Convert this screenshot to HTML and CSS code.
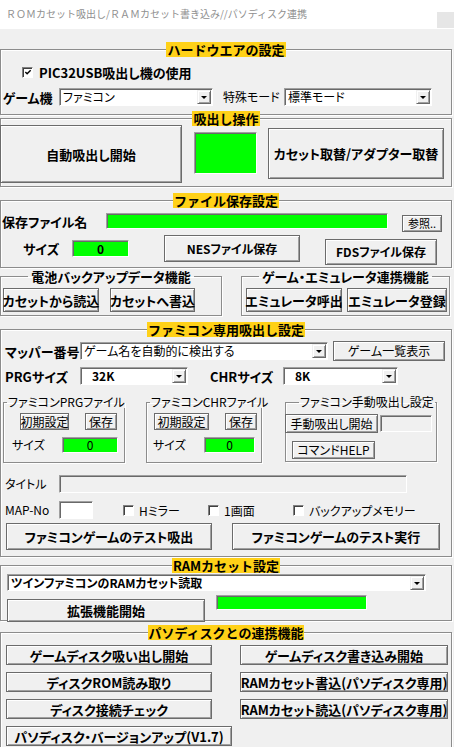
FILE: index.html
```html
<!DOCTYPE html>
<html lang="ja">
<head>
    <meta charset="UTF-8">
    <title>ROMカセット吸出し</title>
    <link rel="stylesheet" href="styles.css">
</head>
<body>
    <div class="titlebar">
        <span class="title-text">ＲＯＭカセット吸出し/ＲＡＭカセット書き込み//パソディスク連携</span>
        <span class="close-box"></span>
    </div>

    <!-- ハードウエア -->
    <fieldset class="group g-hw">
        <legend class="group-title hl">ハードウエアの設定</legend>
        <div class="row hw-check">
            <span class="checkbox checked"><svg viewBox="0 0 9 9" width="9" height="9"><path d="M1.5 4 L3.5 6 L7.5 2" fill="none" stroke="#000" stroke-width="1.6"/></svg></span>
            <span class="bold">PIC32USB吸出し機の使用</span>
        </div>
        <div class="row hw-select">
            <span class="label bold lbl-console">ゲーム機</span>
            <div class="combo combo-console"><span class="combo-text">ファミコン</span><span class="drop"></span></div>
            <span class="label lbl-mode">特殊モード</span>
            <div class="combo combo-mode"><span class="combo-text">標準モード</span><span class="drop"></span></div>
        </div>
    </fieldset>

    <!-- 吸出し操作 -->
    <fieldset class="group g-dump">
        <legend class="group-title hl">吸出し操作</legend>
        <div class="row dump-row">
            <button class="btn bold btn-auto">自動吸出し開始</button>
            <div class="field green dump-lamp"></div>
            <button class="btn bold btn-swap">カセット取替/アダプター取替</button>
        </div>
    </fieldset>

    <!-- ファイル保存 -->
    <fieldset class="group g-save">
        <legend class="group-title hl">ファイル保存設定</legend>
        <div class="row save-name">
            <span class="label bold lbl-file">保存ファイル名</span>
            <div class="field green file-field"></div>
            <button class="btn small btn-browse">参照..</button>
        </div>
        <div class="row save-size">
            <span class="label bold lbl-size">サイズ</span>
            <div class="field green size-field bold">0</div>
            <button class="btn bold btn-nes">NESファイル保存</button>
            <button class="btn bold btn-fds">FDSファイル保存</button>
        </div>
    </fieldset>

    <div class="pair">
        <fieldset class="group g-battery">
            <legend class="group-title">電池バックアップデータ機能</legend>
            <div class="row pair-row">
                <button class="btn bold btn-read">カセットから読込</button>
                <button class="btn bold btn-write">カセットへ書込</button>
            </div>
        </fieldset>
        <fieldset class="group g-emu">
            <legend class="group-title">ゲーム・エミュレータ連携機能</legend>
            <div class="row pair-row">
                <button class="btn bold btn-emu-call">エミュレータ呼出</button>
                <button class="btn bold btn-emu-reg">エミュレータ登録</button>
            </div>
        </fieldset>
    </div>

    <!-- ファミコン専用 -->
    <fieldset class="group g-fc">
        <legend class="group-title hl">ファミコン専用吸出し設定</legend>
        <div class="row fc-mapper">
            <span class="label bold lbl-fc">マッパー番号</span>
            <div class="combo combo-mapper"><span class="combo-text">ゲーム名を自動的に検出する</span><span class="drop"></span></div>
            <button class="btn btn-list">ゲーム一覧表示</button>
        </div>
        <div class="row fc-size">
            <span class="label bold lbl-fc">PRGサイズ</span>
            <div class="combo combo-prg"><span class="combo-text bold">32K</span><span class="drop"></span></div>
            <span class="label bold lbl-chr">CHRサイズ</span>
            <div class="combo combo-chr"><span class="combo-text bold">8K</span><span class="drop"></span></div>
        </div>

        <div class="row fc-subs">
            <fieldset class="sub sub-prg">
                <legend class="sub-title">ファミコンPRGファイル</legend>
                <div class="row sub-btns">
                    <button class="btn btn-init-prg">初期設定</button>
                    <button class="btn btn-keep">保存</button>
                </div>
                <div class="row sub-size">
                    <span class="label lbl-sub-prg">サイズ</span>
                    <div class="field green sub-field-prg">0</div>
                </div>
            </fieldset>
            <fieldset class="sub sub-chr">
                <legend class="sub-title">ファミコンCHRファイル</legend>
                <div class="row sub-btns">
                    <button class="btn btn-init-chr">初期設定</button>
                    <button class="btn btn-keep">保存</button>
                </div>
                <div class="row sub-size">
                    <span class="label lbl-sub-chr">サイズ</span>
                    <div class="field green sub-field-chr">0</div>
                </div>
            </fieldset>
            <fieldset class="sub sub-manual">
                <legend class="sub-title manual-title">ファミコン手動吸出し設定</legend>
                <div class="row manual-row">
                    <button class="btn btn-manual">手動吸出し開始</button>
                    <div class="field disabled manual-field"></div>
                </div>
                <button class="btn btn-help">コマンドHELP</button>
            </fieldset>
        </div>

        <div class="row fc-title">
            <span class="label lbl-info">タイトル</span>
            <div class="field disabled title-field"></div>
        </div>
        <div class="row fc-map">
            <span class="label lbl-info">MAP-No</span>
            <div class="field white map-field"></div>
            <label class="check-item ci-mirror"><span class="checkbox"></span>Hミラー</label>
            <label class="check-item ci-one"><span class="checkbox"></span>1画面</label>
            <label class="check-item"><span class="checkbox"></span>バックアップメモリー</label>
        </div>
        <div class="row fc-test">
            <button class="btn bold btn-test-dump">ファミコンゲームのテスト吸出</button>
            <button class="btn bold btn-test-run">ファミコンゲームのテスト実行</button>
        </div>
    </fieldset>

    <!-- RAMカセット -->
    <fieldset class="group g-ram">
        <legend class="group-title hl">RAMカセット設定</legend>
        <div class="combo combo-ram"><span class="combo-text bold">ツインファミコンのRAMカセット読取</span><span class="drop"></span></div>
        <div class="row ram-row">
            <button class="btn bold btn-ext">拡張機能開始</button>
            <div class="field green ram-lamp"></div>
        </div>
    </fieldset>

    <!-- パソディスク -->
    <fieldset class="group g-disk">
        <legend class="group-title hl">パソディスクとの連携機能</legend>
        <div class="disk-grid">
            <button class="btn bold">ゲームディスク吸い出し開始</button>
            <button class="btn bold">ゲームディスク書き込み開始</button>
            <button class="btn bold">ディスクROM読み取り</button>
            <button class="btn bold">RAMカセット書込(パソディスク専用)</button>
            <button class="btn bold">ディスク接続チェック</button>
            <button class="btn bold">RAMカセット読込(パソディスク専用)</button>
            <button class="btn bold btn-version">パソディスク・バージョンアップ(V1.7)</button>
        </div>
    </fieldset>
</body>
</html>
```

FILE: styles.css
```css
* {
    margin: 0;
    padding: 0;
    box-sizing: border-box;
}

body {
    width: 454px;
    height: 747px;
    overflow: hidden;
    background: #f0f0f0;
    font-family: "Noto Sans CJK JP", "Noto Sans", sans-serif;
    font-size: 12px;
    font-feature-settings: "palt";
    color: #000;
}

.bold {
    font-weight: 700;
}

/* title bar */
.titlebar {
    height: 29px;
    background: #fff;
    display: flex;
    justify-content: space-between;
    align-items: flex-start;
}

.title-text {
    margin: 7px 0 0 6px;
    font-size: 10px;
    line-height: 14px;
    font-feature-settings: normal;
    color: #8f8f8f;
}

.close-box {
    width: 17px;
    height: 16px;
    margin-top: 12px;
    background: #e6e6e6;
}

/* groups */
.group {
    margin: 0;
    padding: 0;
    min-width: 0;
    border: 1px solid #8c8c8c;
    box-shadow: inset 1px 1px 0 #fff, 1px 1px 0 #fff;
    width: 452px;
}

.group-title {
    margin: 0 auto;
    padding: 0 1px;
    font-size: 13px;
    font-weight: 700;
    font-feature-settings: normal;
    line-height: 15px;
    height: 15px;
}

.group-title.hl {
    background: #ffd118;
}

.row {
    display: flex;
    align-items: flex-start;
}

.label {
    line-height: 1;
    display: flex;
    align-items: center;
    white-space: nowrap;
}

/* buttons */
.btn {
    font-family: inherit;
    font-size: 12px;
    font-feature-settings: "palt";
    background: #f0f0f0;
    border: 1px solid #6b6b6b;
    box-shadow: inset 1px 1px 0 #fff, inset -1px -1px 0 #a0a0a0;
    color: #000;
    line-height: 1;
    white-space: nowrap;
    display: flex;
    align-items: center;
    justify-content: center;
    flex-shrink: 0;
}

.btn.bold {
    font-weight: 700;
}

.btn.small {
    font-size: 11px;
}

/* fields */
.field {
    border: 1px solid;
    border-color: #a0a0a0 #fff #fff #a0a0a0;
    box-shadow: inset 1px 1px 0 #696969;
    flex-shrink: 0;
    display: flex;
    align-items: center;
    justify-content: center;
    line-height: 1;
}

.field.green {
    background: #00ff00;
}

.field.white {
    background: #fff;
}

.field.disabled {
    background: #f0f0f0;
}

/* combobox */
.combo {
    height: 18px;
    background: #fff;
    border: 1px solid;
    border-color: #a0a0a0 #fff #fff #a0a0a0;
    box-shadow: inset 1px 1px 0 #696969;
    display: flex;
    align-items: center;
    justify-content: space-between;
    padding: 1px 1px 1px 3px;
    flex-shrink: 0;
}

.combo-text {
    line-height: 1;
    white-space: nowrap;
}

.drop {
    width: 14px;
    height: 14px;
    background: #f0f0f0;
    border: 1px solid;
    border-color: #f0f0f0 #696969 #696969 #f0f0f0;
    box-shadow: inset 1px 1px 0 #fff, inset -1px -1px 0 #a0a0a0;
    display: flex;
    align-items: center;
    justify-content: center;
}

.drop::after {
    content: "";
    border-left: 3px solid transparent;
    border-right: 3px solid transparent;
    border-top: 3px solid #000;
    margin-top: 1px;
}

/* checkbox */
.checkbox {
    width: 11px;
    height: 11px;
    background: #fff;
    border: 1px solid;
    border-color: #808080 #fff #fff #808080;
    box-shadow: inset 1px 1px 0 #404040;
    display: inline-flex;
    align-items: center;
    justify-content: center;
    flex-shrink: 0;
}

.checkbox svg {
    margin: 1px 0 0 1px;
}

/* hardware */
.g-hw {
    margin-top: 13px;
    height: 73px;
}

.hw-check {
    margin: 8px 0 0 21px;
    height: 14px;
    align-items: center;
    gap: 6px;
    font-size: 13px;
}

.hw-select {
    margin-top: 9px;
    height: 18px;
}

.hw-select .label {
    height: 18px;
}

.lbl-console {
    margin-left: 2px;
    width: 56px;
    font-size: 13px;
}

.combo-console {
    width: 154px;
}

.lbl-mode {
    margin-left: 10px;
    width: 61px;
}

.combo-mode {
    width: 148px;
}

/* dump */
.g-dump {
    margin-top: -4px;
    height: 76px;
}

.dump-row {
    margin-top: -1px;
}

.btn-auto {
    margin-left: -1px;
    width: 182px;
    height: 58px;
    font-size: 13px;
}

.dump-lamp {
    margin: 7px 0 0 12px;
    width: 63px;
    height: 42px;
}

.btn-swap {
    margin: 3px 0 0 11px;
    width: 176px;
    height: 51px;
    font-size: 13px;
}

/* save */
.g-save {
    margin-top: 6px;
    height: 75px;
}

.save-name {
    margin-top: 5px;
    height: 19px;
}

.lbl-file {
    margin-left: 1px;
    width: 104px;
    height: 16px;
    font-size: 13px;
}

.file-field {
    width: 282px;
    height: 16px;
}

.btn-browse {
    margin: 2px 0 0 14px;
    width: 40px;
    height: 17px;
}

.save-size {
    margin-top: 3px;
}

.lbl-size {
    margin: 5px 0 0 22px;
    width: 49px;
    height: 17px;
    font-size: 13px;
}

.size-field {
    margin-top: 5px;
    width: 57px;
    height: 17px;
}

.btn-nes {
    margin-left: 35px;
    width: 136px;
    height: 27px;
}

.btn-fds {
    margin: 4px 0 0 25px;
    width: 112px;
    height: 26px;
}

/* battery / emulator */
.pair {
    display: flex;
    margin-top: 1px;
}

.g-battery {
    width: 222px;
    height: 47px;
}

.g-emu {
    margin-left: 19px;
    width: 209px;
    height: 47px;
}

.g-battery .group-title,
.g-emu .group-title {
    padding: 0 3px;
    font-feature-settings: "palt";
}

.pair-row {
    margin-top: 4px;
}

.pair-row .btn {
    height: 24px;
    font-size: 13px;
}

.btn-read {
    margin-left: 2px;
    width: 96px;
}

.btn-write {
    margin-left: 11px;
    width: 85px;
}

.btn-emu-call {
    margin-left: 4px;
    width: 96px;
}

.btn-emu-reg {
    margin-left: 5px;
    width: 100px;
}

/* famicom */
.g-fc {
    margin-top: 6px;
    height: 235px;
}

.fc-mapper {
    margin-top: 4px;
    height: 20px;
}

.lbl-fc {
    margin-left: 4px;
    width: 75px;
    height: 20px;
    font-size: 13px;
}

.combo-mapper {
    margin-top: 1px;
    width: 248px;
}

.btn-list {
    margin-left: 5px;
    width: 112px;
    height: 20px;
}

.fc-size {
    margin-top: 6px;
    height: 18px;
}

.fc-size .lbl-fc {
    height: 18px;
}

.combo-prg {
    width: 108px;
}

.combo-prg .combo-text,
.combo-chr .combo-text {
    margin-left: 8px;
}

.lbl-chr {
    margin-left: 22px;
    width: 73px;
    height: 18px;
    font-size: 13px;
}

.combo-chr {
    width: 115px;
}

.fc-subs {
    margin-top: 11px;
}

.sub {
    margin: 0;
    padding: 0;
    min-width: 0;
    border: 1px solid #8c8c8c;
    box-shadow: inset 1px 1px 0 #fff, 1px 1px 0 #fff;
    height: 67px;
}

.sub-title {
    margin-left: 3px;
    padding: 0 1px;
    line-height: 12px;
    height: 12px;
    white-space: nowrap;
}

.sub-prg {
    margin-left: 2px;
    width: 122px;
}

.sub-chr {
    margin-left: 21px;
    width: 116px;
}

.sub-manual {
    margin-left: 23px;
    width: 152px;
    height: 66px;
}

.manual-title {
    margin-left: 13px;
}

.sub-btns {
    margin-top: 5px;
}

.sub-btns .btn {
    height: 17px;
}

.btn-init-prg {
    margin-left: 16px;
    width: 49px;
}

.btn-init-chr {
    margin-left: 7px;
    width: 55px;
}

.btn-keep {
    margin-left: 16px;
    width: 32px;
}

.sub-size {
    margin-top: 7px;
}

.sub-size .label {
    height: 16px;
}

.lbl-sub-prg {
    margin-left: 8px;
    width: 50px;
}

.sub-field-prg {
    width: 56px;
    height: 16px;
}

.lbl-sub-chr {
    margin-left: 6px;
    width: 51px;
}

.sub-field-chr {
    width: 51px;
    height: 16px;
}

.manual-row {
    margin-top: 6px;
}

.btn-manual {
    margin-left: -1px;
    width: 93px;
    height: 19px;
}

.manual-field {
    margin: 1px 0 0 2px;
    width: 52px;
    height: 17px;
}

.btn-help {
    margin: 8px 0 0 6px;
    width: 83px;
    height: 18px;
}

.fc-title {
    margin-top: 12px;
    height: 18px;
}

.lbl-info {
    margin-left: 4px;
    width: 54px;
    height: 18px;
}

.title-field {
    width: 348px;
    height: 18px;
}

.fc-map {
    margin-top: 8px;
    height: 18px;
}

.map-field {
    width: 34px;
    height: 18px;
}

.check-item {
    display: flex;
    align-items: center;
    gap: 5px;
    height: 18px;
    white-space: nowrap;
}

.ci-mirror {
    margin-left: 30px;
    width: 85px;
}

.ci-one {
    width: 85px;
}

.fc-test {
    margin-top: 4px;
}

.fc-test .btn {
    height: 27px;
    font-size: 13px;
}

.btn-test-dump {
    margin-left: 5px;
    width: 206px;
}

.btn-test-run {
    margin-left: 20px;
    width: 208px;
}

/* RAM cassette */
.g-ram {
    margin-top: 1px;
    height: 63px;
}

.combo-ram {
    margin: 1px 0 0 6px;
    width: 419px;
    height: 17px;
}

.ram-row {
    margin-top: 4px;
}

.btn-ext {
    margin: 4px 0 0 6px;
    width: 198px;
    height: 23px;
    font-size: 13px;
}

.ram-lamp {
    margin-left: 11px;
    width: 151px;
    height: 15px;
}

/* disk */
.g-disk {
    margin-top: 4px;
    height: 140px;
}

.disk-grid {
    margin: 5px 0 0 5px;
    display: grid;
    grid-template-columns: 206px 208px;
    grid-auto-rows: 20px;
    column-gap: 28px;
    row-gap: 7px;
}

.disk-grid .btn {
    font-size: 13px;
}

.btn-version {
    width: 226px;
}
```
